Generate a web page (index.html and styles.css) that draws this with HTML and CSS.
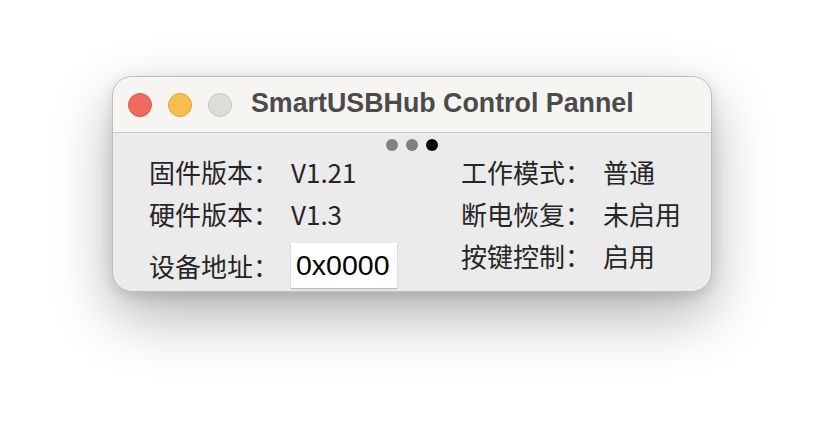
FILE: index.html
```html
<!DOCTYPE html>
<html lang="zh-CN">
<head>
<meta charset="utf-8">
<title>SmartUSBHub Control Pannel</title>
<link rel="stylesheet" href="styles.css">
</head>
<body>
<div class="window">
  <div class="titlebar">
    <div class="lights">
      <span class="light red"></span>
      <span class="light yellow"></span>
      <span class="light gray"></span>
    </div>
    <div class="title">SmartUSBHub Control Pannel</div>
  </div>
  <div class="content">
    <div class="pager">
      <span class="dot"></span>
      <span class="dot"></span>
      <span class="dot active"></span>
    </div>
    <div class="grid">
      <div class="col">
        <div class="row"><span class="label">固件版本：</span><span class="value">V1.21</span></div>
        <div class="row"><span class="label">硬件版本：</span><span class="value">V1.3</span></div>
        <div class="row row-field"><span class="label">设备地址：</span><span class="field">0x0000</span></div>
      </div>
      <div class="col">
        <div class="row"><span class="label">工作模式：</span><span class="value">普通</span></div>
        <div class="row"><span class="label">断电恢复：</span><span class="value">未启用</span></div>
        <div class="row"><span class="label">按键控制：</span><span class="value">启用</span></div>
      </div>
    </div>
  </div>
</div>
</body>
</html>
```
FILE: styles.css
```css
html, body {
  margin: 0;
  background: #ffffff;
}
body {
  padding: 76px 0 0 112px;
  height: 440px;
  box-sizing: border-box;
  overflow: hidden;
}
.window {
  width: 600px;
  height: 216px;
  box-sizing: border-box;
  border: 1px solid #bdbdbd;
  border-radius: 20px;
  background: #ebebeb;
  overflow: hidden;
  box-shadow: 0 24px 60px rgba(0, 0, 0, 0.30), 0 4px 14px rgba(0, 0, 0, 0.12);
  display: flex;
  flex-direction: column;
}
.titlebar {
  height: 56px;
  flex: none;
  background: #f6f5f2;
  border-bottom: 1px solid #c8c8c8;
  display: flex;
  align-items: center;
  padding-left: 15px;
  box-sizing: border-box;
}
.lights {
  display: flex;
  gap: 16px;
}
.light {
  width: 24px;
  height: 24px;
  border-radius: 50%;
  box-sizing: border-box;
}
.red { background: #ee6a5f; border: 1px solid #d6574c; }
.yellow { background: #f5bf4f; border: 1px solid #d9a53c; }
.gray { background: #dddcd9; border: 1px solid #c4c3c0; }
.title {
  margin-left: 19px;
  font-family: "Liberation Sans", Arial, sans-serif;
  font-weight: bold;
  font-size: 26.8px;
  color: #4b4b4b;
  margin-top: -2px;
}
.content {
  flex: 1;
  display: flex;
  flex-direction: column;
}
.pager {
  display: flex;
  justify-content: center;
  gap: 8px;
  margin-top: 6px;
}
.dot {
  width: 12px;
  height: 12px;
  border-radius: 50%;
  background: #808080;
}
.dot.active { background: #0a0a0a; }
.grid {
  display: flex;
  padding-left: 36px;
  margin-top: -1px;
}
.col {
  display: flex;
  flex-direction: column;
}
.col:first-child { width: 312px; }
.row {
  height: 42px;
  display: flex;
  align-items: center;
  font-family: "Noto Sans CJK SC", sans-serif;
  font-size: 26px;
  color: #262626;
}
.label {
  width: 142px;
  flex: none;
}
.row-field {
  height: 45px;
  margin-top: 9px;
}
.field {
  height: 45px;
  width: 106px;
  box-sizing: border-box;
  background: #ffffff;
  box-shadow: 0 1px 1.5px rgba(0, 0, 0, 0.25);
  display: flex;
  align-items: center;
  padding-left: 5px;
  font-family: "Liberation Sans", Arial, sans-serif;
  font-size: 28.5px;
  color: #000000;
}
```
